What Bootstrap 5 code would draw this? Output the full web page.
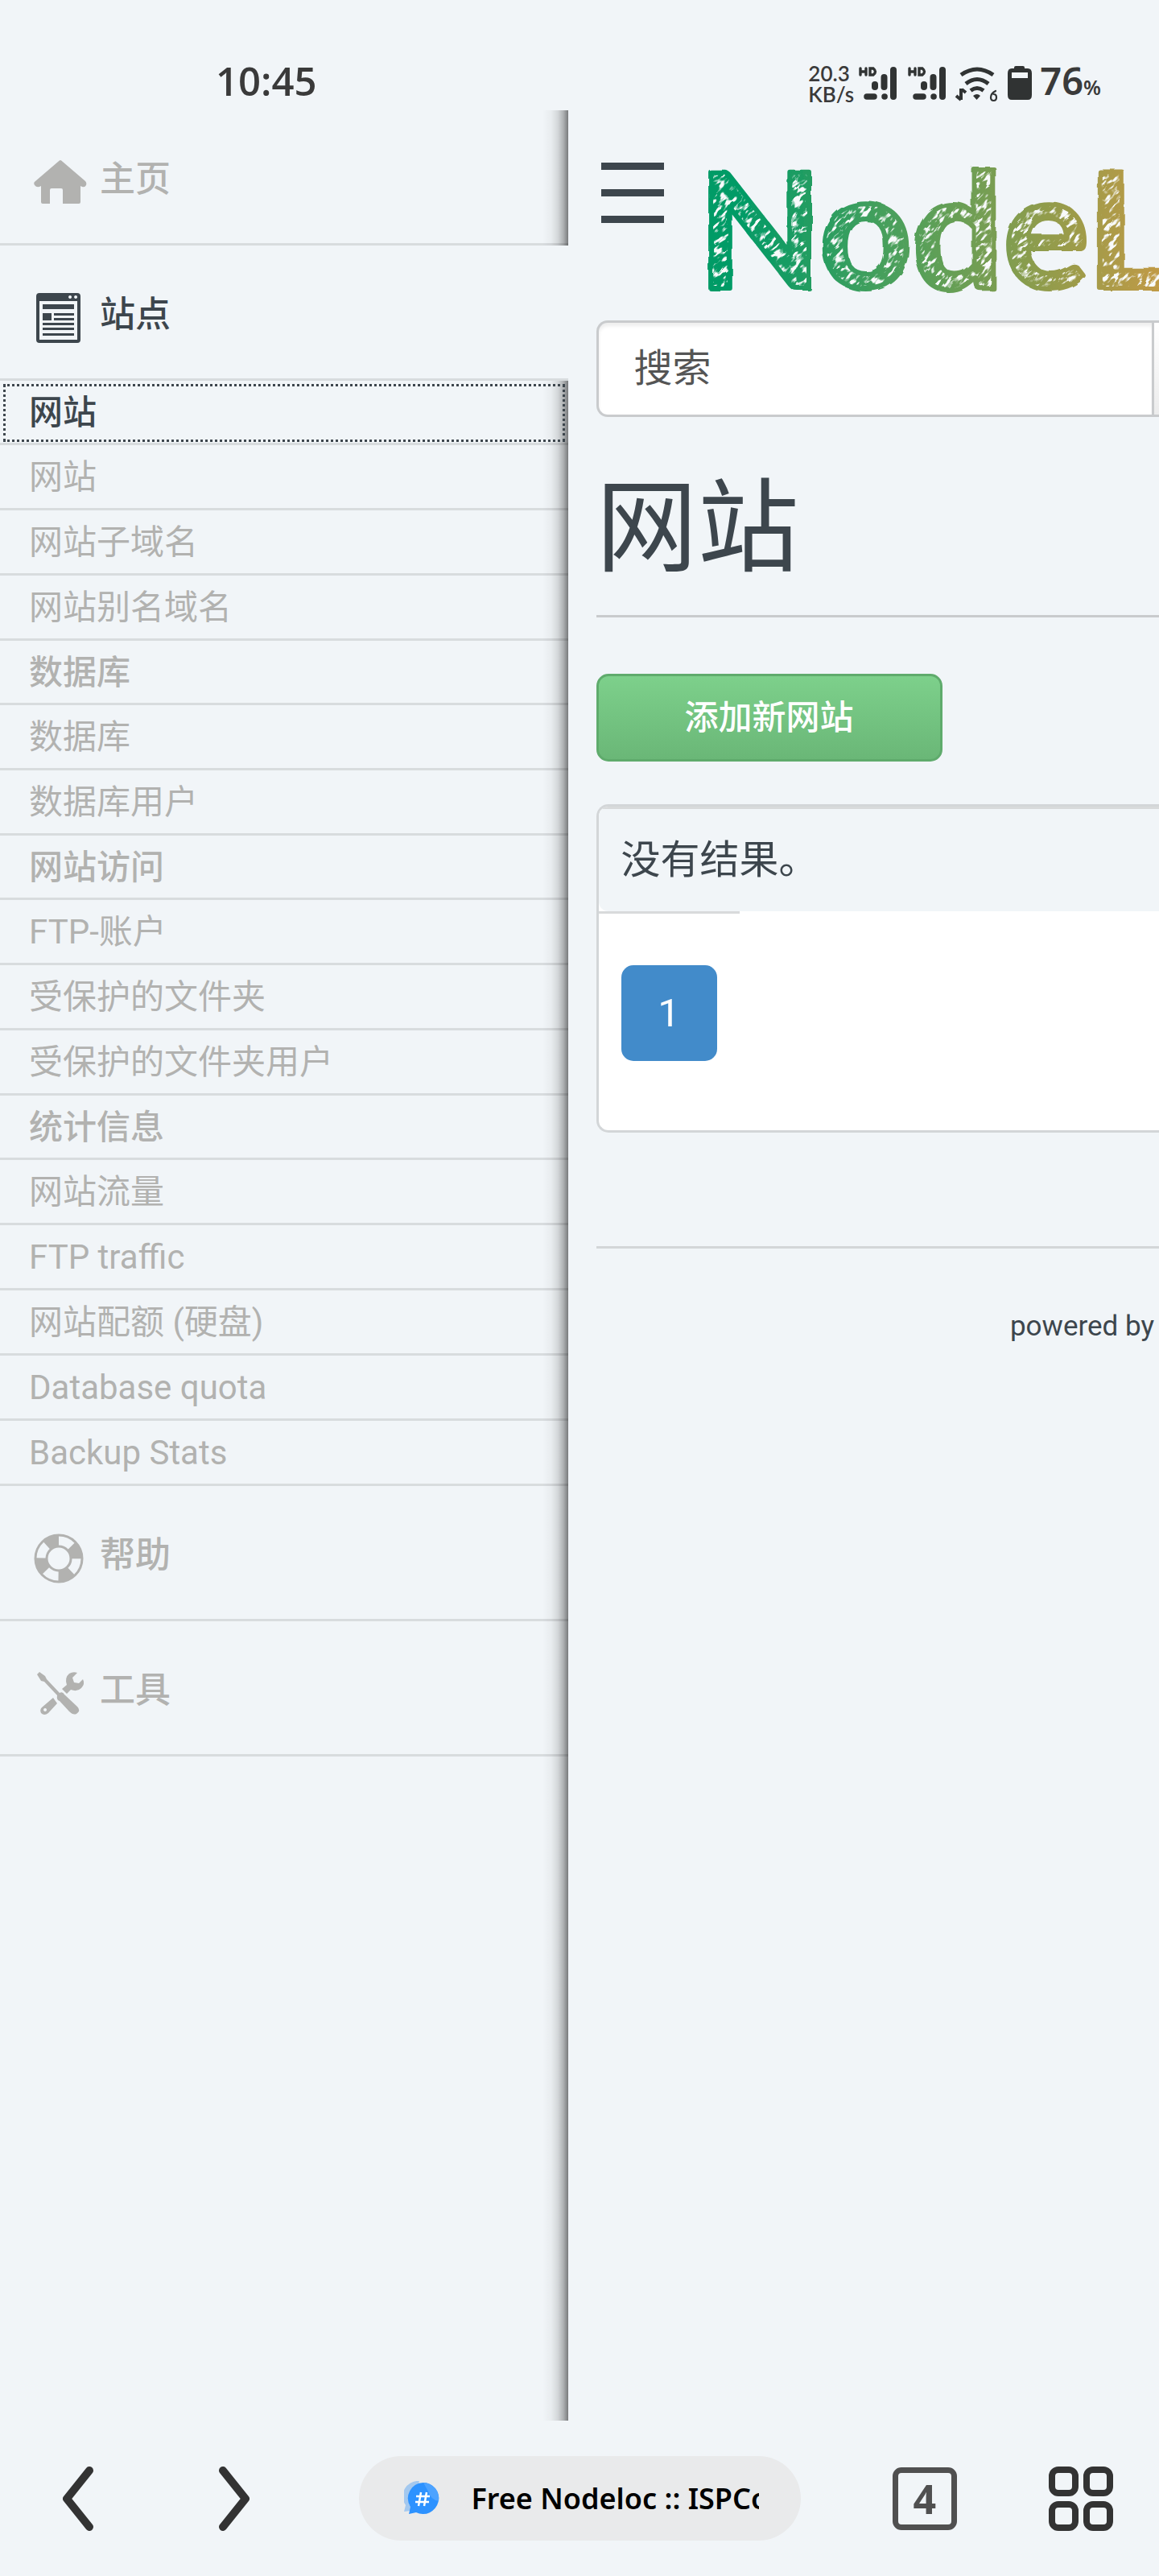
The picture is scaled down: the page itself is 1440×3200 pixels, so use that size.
<!DOCTYPE html>
<html lang="zh-CN">
<head>
<meta charset="utf-8">
<meta name="viewport" content="width=device-width, initial-scale=1">
<title>Free Nodeloc :: ISPConfig</title>
<link href="https://cdn.jsdelivr.net/npm/bootstrap@5.3.0/dist/css/bootstrap.min.css" rel="stylesheet">
<style>
  :root { --page: #f1f5f8; --ink: #3d464d; --muted: #b2b2b0; --line: rgba(0, 0, 0, .1); --rule: #c9cbcd; }
  body { background: var(--page); color: var(--ink); font-family: Roboto, "Noto Sans CJK SC", sans-serif; font-size: 42px; line-height: 60px; }
  a { text-decoration: none; }

  .status-bar { height: 137px; padding: 60px 72px 0 268px; color: #3a3a3a; font-family: "Noto Sans", sans-serif; font-weight: 600; line-height: 80px; }
  .clock { font-family: "Open Sans", sans-serif; font-size: 49px; }
  .net-speed { width: 62px; font-family: Lato, sans-serif; font-size: 26px; line-height: 26px; font-weight: 600; }
  .charge { font-size: 47px; }
  .charge-unit { font-size: 25px; }

  .side-menu { flex: 0 0 49%; background: linear-gradient(to left, rgba(0,0,0,.5) 0, rgba(0,0,0,.28) 6px, rgba(0,0,0,.12) 13px, rgba(0,0,0,.04) 21px, transparent 32px); }
  .menu-main { height: 168px; padding: 6px 0 0 42px; border-bottom: 3px solid var(--line); color: var(--muted); font-size: 44px; font-weight: 500; gap: 16px; }
  .menu-main svg { width: 66px; height: 66px; margin-top: 8px; }
  .menu-main.current { color: var(--ink); background-color: var(--page); }
  .menu-sub { height: 81px; padding: 2px 0 0 36px; border-bottom: 3px solid var(--line); color: var(--muted); }
  .menu-sub.group-head { height: 80px; font-weight: 500; }
  .menu-sub.current { color: var(--ink); outline: 3px dotted var(--ink); outline-offset: -7px; }

  .content { min-width: 0; padding: 49px 0 0 35px; }
  .brand-row { height: 212px; gap: 50px; }
  .menu-toggle { width: 78px; margin: 16px 0 0 6px; gap: 24px; }
  .menu-toggle span { height: 9px; background: var(--ink); }
  .brand-mark { width: 565px; height: 212px; }
  .brand-mark text { font: 700 200px Lato, sans-serif; }
  .search { height: 120px; }
  .search .form-control { border: 3px solid var(--rule); border-right: 0; border-radius: 14px 0 0 14px; padding: 0 0 0 44px; font-size: 48px; color: #555; box-shadow: inset 0 4px 4px rgba(0,0,0,.07); }
  .search .form-control::placeholder { color: #555; }
  .search .btn { width: 9px; padding: 0; border: 3px solid var(--rule); border-right: 0; border-radius: 0; background: linear-gradient(#fff, #ececec); }
  .page-title { margin: 53px 0 0; padding-bottom: 21px; border-bottom: 3px solid var(--rule); font-size: 126px; line-height: 172px; font-weight: 400; }
  .btn-add { width: 430px; height: 109px; margin-top: 70px; border: 3px solid #5fab6c; border-radius: 15px; background: linear-gradient(#7dd08b, #6ab777); color: #fff; font-size: 42px; font-weight: 500; }
  .results { margin-top: 53px; height: 408px; border: 3px solid #d3d6d8; border-right: 0; border-radius: 15px 0 0 15px; background: #fff; overflow: hidden; font-size: 49px; }
  .results-empty { height: 130px; padding-left: 28px; border-top: 3px solid #d8dadb; border-radius: 0 0 0 12px; background: var(--page); }
  .results-tab { width: 175px; height: 3px; background: #d8dadb; }
  .results .page-link { width: 119px; height: 119px; margin: 64px 0 0 28px; padding: 0; border: 0; border-radius: 15px; background: #428bca; color: #fff; }
  .foot { margin-top: 141px; padding: 70px 6px 0 0; border-top: 3px solid #d3d6d8; font-size: 35px; line-height: 54px; }

  .tool-bar { height: 193px; padding: 0 57px; }
  .tool-bar .btn { width: 80px; padding: 0; border: 0; }
  .tool-bar .address { width: 549px; height: 105px; padding: 0 52px 0 56px; border-radius: 53px; background: #e9eaeb; color: #000; font: 600 36px/60px "Noto Sans", sans-serif; gap: 36px; }
  .tool-bar .tab-count { height: 78px; border: 7px solid #505050; border-radius: 11px; color: #505050; font: 700 50px/60px "Open Sans", sans-serif; }
</style>
</head>
<body class="d-flex flex-column min-vh-100 overflow-x-hidden">

<header class="status-bar d-flex justify-content-between align-items-start">
  <div class="clock">10:45</div>
  <div class="d-flex align-items-center">
    <div class="net-speed"><div>20.3</div><div>KB/s</div></div>
    <svg width="176" height="46" viewBox="0 0 176 46" fill="#303333" stroke="#303333" stroke-linecap="round" aria-hidden="true">
      <g id="sim">
        <path d="M3 4v8M10 4v8M3 8h7M15 4v8h4q5-4 0-8z" fill="none" stroke-width="3.4"/>
        <path d="M44 6v33M32.500 15v12" stroke-width="8"/>
        <path d="M21 24v3" stroke-width="8"/>
        <path d="M11 39h9M33 39h.1" stroke-width="7.500"/>
      </g>
      <use href="#sim" x="61"/>
      <g fill="none" stroke-width="5" stroke-linecap="butt">
        <path d="M128 12q20-14 40 0M134 23q14-11 28 0M140 31.500q8-6 16 0"/>
        <path d="M128 29v14M122 38l6 5M129 30l5 4" stroke-width="4"/>
      </g>
      <path d="M143 38q5-4 9 0l-4.500 5z" stroke="none"/>
      <path d="M171 32q-6 3-6 8 0 4 3.500 4t3.500-4-3.500-4" fill="none" stroke-width="2.200"/>
    </svg>
    <svg class="ms-2 me-2" width="34" height="46" viewBox="0 0 34 46" fill="#303333" aria-hidden="true"><rect x="10" y="1" width="13" height="6" rx="2"/><path fill-rule="evenodd" d="M7 4h20q5 0 5 6v27q0 6-5 6H7q-5 0-5-6V10q0-6 5-6zM7 9v7h20V9z"/></svg>
    <div class="charge">76<span class="charge-unit">%</span></div>
  </div>
</header>

<div class="d-flex flex-grow-1">
  <nav class="side-menu" aria-label="菜单">
    <a href="#" class="menu-main d-flex align-items-center">
      <svg viewBox="0 0 66 66" fill="currentColor" aria-hidden="true"><path d="M33 5Q34 5 36 7L64 31Q66 33 65 36 63 40 58 37V57Q58 59 56 59H36V42Q36 40 34 40H22Q20 40 20 42V59H11Q9 59 9 57V37Q4 40 1 36-1 33 2 31L30 7Q32 5 33 5z"/></svg>
      <span>主页</span>
    </a>
    <a href="#" class="menu-main current d-flex align-items-center">
      <svg viewBox="0 0 66 66" fill="currentColor" aria-hidden="true"><path fill-rule="evenodd" d="M7 2H54Q58 2 58 6V60Q58 64 54 64H7Q3 64 3 60V6Q3 2 7 2zM7 12V60H54V12zM45 5a2 2 0 1 0 .1 0zM52 5a2 2 0 1 0 .1 0z"/><path d="M11 16H50V22H11zM11 27H22V36H11zM25 27H50V30H25zM25 33H50V36H25zM11 39H50V42H11zM11 45H50V48H11zM11 52H50V55H11z"/></svg>
      <span>站点</span>
    </a>
    <a href="#" class="menu-sub group-head current d-flex align-items-center">网站</a>
    <a href="#" class="menu-sub d-flex align-items-center">网站</a>
    <a href="#" class="menu-sub d-flex align-items-center">网站子域名</a>
    <a href="#" class="menu-sub d-flex align-items-center">网站别名域名</a>
    <a href="#" class="menu-sub group-head d-flex align-items-center">数据库</a>
    <a href="#" class="menu-sub d-flex align-items-center">数据库</a>
    <a href="#" class="menu-sub d-flex align-items-center">数据库用户</a>
    <a href="#" class="menu-sub group-head d-flex align-items-center">网站访问</a>
    <a href="#" class="menu-sub d-flex align-items-center">FTP-账户</a>
    <a href="#" class="menu-sub d-flex align-items-center">受保护的文件夹</a>
    <a href="#" class="menu-sub d-flex align-items-center">受保护的文件夹用户</a>
    <a href="#" class="menu-sub group-head d-flex align-items-center">统计信息</a>
    <a href="#" class="menu-sub d-flex align-items-center">网站流量</a>
    <a href="#" class="menu-sub d-flex align-items-center">FTP traffic</a>
    <a href="#" class="menu-sub d-flex align-items-center">网站配额 (硬盘)</a>
    <a href="#" class="menu-sub d-flex align-items-center">Database quota</a>
    <a href="#" class="menu-sub d-flex align-items-center">Backup Stats</a>
    <a href="#" class="menu-main d-flex align-items-center">
      <svg viewBox="0 0 66 66" aria-hidden="true"><circle cx="31" cy="33" r="22" fill="none" stroke="currentColor" stroke-width="17"/><circle cx="31" cy="33" r="22" fill="none" stroke="#f1f5f8" stroke-width="11" stroke-dasharray="17.280 17.280" transform="rotate(-90 31 33)"/></svg>
      <span>帮助</span>
    </a>
    <a href="#" class="menu-main d-flex align-items-center">
      <svg viewBox="0 0 66 66" fill="currentColor" aria-hidden="true"><path d="M35 27L41 22Q38 13 44 8 49 5 54 7L48 13 50 19 56 20 61 15Q64 21 59 26 54 31 46 28L41 33zM24 38L29 45 18 57Q13 61 9 57 7 53 10 50zM14 51a2 2 0 1 0 .1 0z" fill-rule="evenodd"/><path d="M7 6L14 11 16 15 32 32Q36 30 38 34L54 49Q59 54 53 58 49 60 44 55L32 42Q28 41 29 35L13 18 9 17 4 9z"/></svg>
      <span>工具</span>
    </a>
  </nav>

  <main class="content flex-grow-1 overflow-hidden">
    <div class="brand-row d-flex align-items-start">
      <button type="button" class="menu-toggle btn p-0 border-0 rounded-0 d-flex flex-column flex-shrink-0" aria-label="菜单"><span></span><span></span><span></span></button>
      <svg class="brand-mark flex-shrink-0" viewBox="0 0 565 212" role="img" aria-label="NodeL">
        <defs>
          <linearGradient id="hue" gradientUnits="userSpaceOnUse" x1="0" y1="0" x2="565" y2="0"><stop offset=".1" stop-color="#069b66"/><stop offset=".45" stop-color="#52a05a"/><stop offset=".75" stop-color="#919c4c"/><stop offset="1" stop-color="#c09a45"/></linearGradient>
          <filter id="scratch" x="0" y="0" width="1" height="1"><feTurbulence type="fractalNoise" baseFrequency=".08 .24" numOctaves="2" seed="4"/><feColorMatrix values="0 0 0 0 .94  0 0 0 0 .957  0 0 0 0 .965  7 0 0 0 -3.500"/></filter>
          <filter id="rough"><feTurbulence type="fractalNoise" baseFrequency=".04" numOctaves="2" seed="2" result="n"/><feDisplacementMap in="SourceGraphic" in2="n" scale="5"/></filter>
          <pattern id="chalk" patternUnits="userSpaceOnUse" width="565" height="212"><rect width="565" height="212" fill="url(#hue)"/><rect x="-200" y="-300" width="1000" height="900" transform="rotate(-45 280 106)" filter="url(#scratch)"/></pattern>
        </defs>
        <text x="-8" y="172" fill="url(#chalk)" stroke="url(#hue)" stroke-width="6" stroke-linejoin="round" filter="url(#rough)">NodeL</text>
      </svg>
    </div>

    <form class="search input-group flex-nowrap">
      <input type="text" class="form-control" placeholder="搜索" aria-label="搜索">
      <button type="button" class="btn" aria-label="搜索"></button>
    </form>

    <h1 class="page-title">网站</h1>
    <button type="button" class="btn btn-add d-block">添加新网站</button>

    <section class="results">
      <div class="results-empty d-flex align-items-center">没有结果。</div>
      <div class="results-tab"></div>
      <a href="#" class="page-link d-flex align-items-center justify-content-center">1</a>
    </section>

    <footer class="foot text-end">powered by</footer>
  </main>
</div>

<nav class="tool-bar d-flex justify-content-between align-items-center" aria-label="浏览器">
  <button type="button" class="btn" aria-label="后退"><svg class="d-block mx-auto" width="38" height="80" viewBox="0 0 38 80" fill="none" stroke="#333" stroke-width="10" stroke-linecap="round" stroke-linejoin="round"><path d="M33 5L5 40 33 75"/></svg></button>
  <button type="button" class="btn" aria-label="前进"><svg class="d-block mx-auto" width="38" height="80" viewBox="0 0 38 80" fill="none" stroke="#333" stroke-width="10" stroke-linecap="round" stroke-linejoin="round"><path d="M5 5L33 40 5 75"/></svg></button>
  <button type="button" class="btn address d-flex align-items-center">
    <svg class="flex-shrink-0" width="48" height="44" viewBox="0 0 48 44" aria-hidden="true"><path d="M19 0a19 19 0 0 0-17 30l-2 8 8-1z" fill="#a3c8ef"/><path d="M24 2a19.500 19.500 0 1 1-9 37l-9 2 2-9A19.500 19.500 0 0 1 24 2z" fill="#2d92ff"/><path d="M24 2a19.500 19.500 0 0 1 19 23q-10-2-13-12z" fill="#4da3ff"/><path d="M21 14l-3 17M28 14l-3 17M15 19h17M14 26h17" stroke="#fff" stroke-width="2.500"/></svg>
    <span class="overflow-hidden text-nowrap text-start">Free Nodeloc :: ISPConfig</span>
  </button>
  <button type="button" class="btn tab-count d-flex align-items-center justify-content-center">4</button>
  <button type="button" class="btn" aria-label="菜单"><svg class="d-block" width="80" height="80" viewBox="0 0 80 80" fill="none" stroke="#333" stroke-width="8"><rect x="4" y="4" width="29" height="29" rx="8"/><rect x="47" y="4" width="29" height="29" rx="8"/><rect x="4" y="47" width="29" height="29" rx="8"/><rect x="47" y="47" width="29" height="29" rx="8"/></svg></button>
</nav>

<script src="https://cdn.jsdelivr.net/npm/bootstrap@5.3.0/dist/js/bootstrap.bundle.min.js"></script>
</body>
</html>
